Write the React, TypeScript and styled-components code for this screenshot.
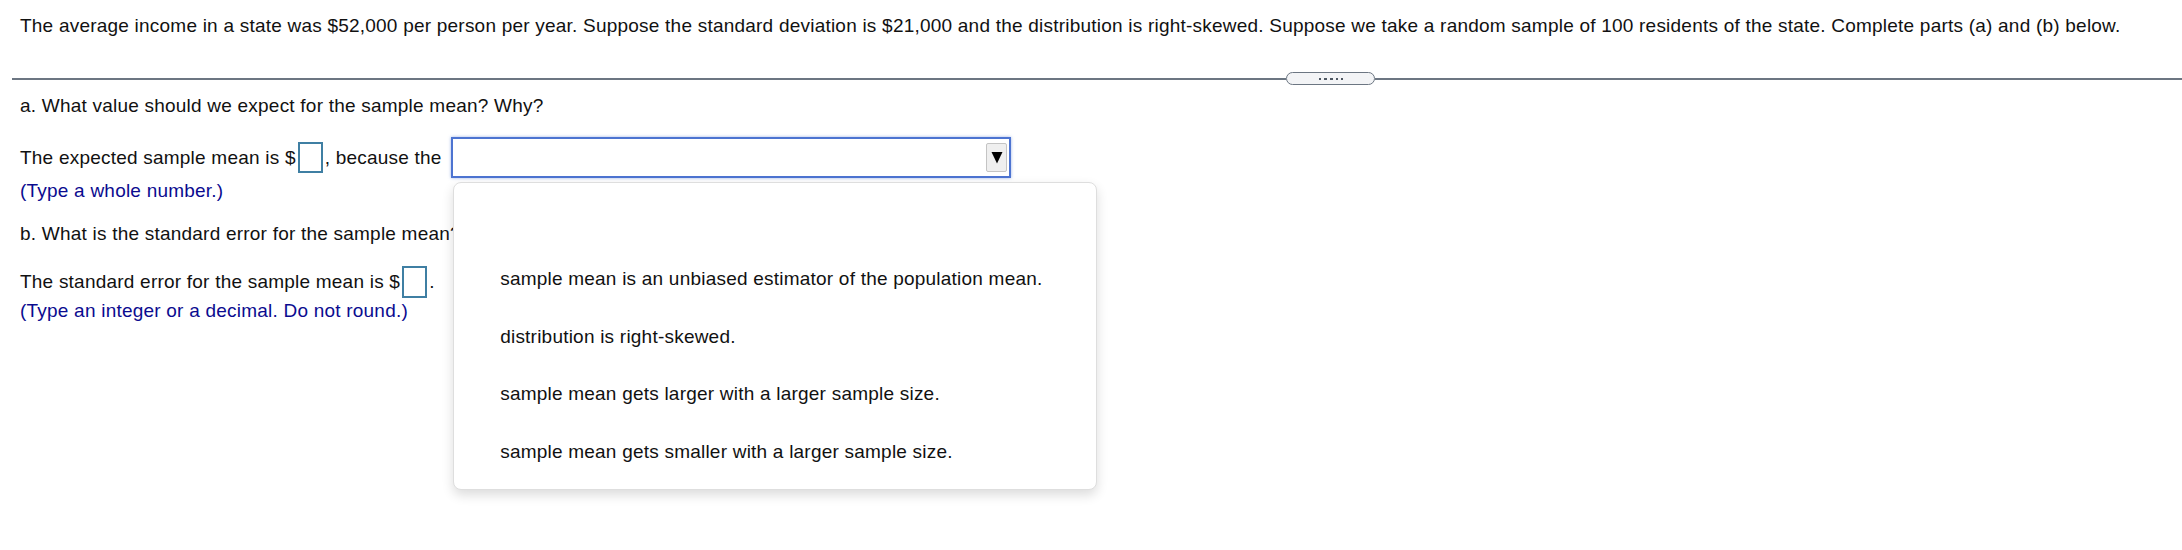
import React from "react";
import styled, { createGlobalStyle } from "styled-components";

const Global = createGlobalStyle`
  html, body { margin: 0; padding: 0; background: #ffffff; }
  body { font-family: "Liberation Sans", Arial, Helvetica, sans-serif; color: #111; }
`;

const Page = styled.div`
  padding-top: 15px;
  font-size: 19px;
  letter-spacing: 0.22px;
  line-height: 21.5px;
  width: 2182px;
  overflow: hidden;
  height: 550px;
  box-sizing: border-box;
`;

const Intro = styled.p`
  margin: 0;
  padding-left: 20px;
  white-space: nowrap;
`;

const Divider = styled.div`
  display: flex;
  align-items: center;
  margin: 35.5px 0 0 12px;
  height: 13px;
`;

const Rule = styled.div<{ $grow?: boolean }>`
  height: 2px;
  background: #6c7682;
  ${(p) => (p.$grow ? "flex: 1 1 auto;" : "flex: 0 0 1274px;")}
`;

const Handle = styled.div`
  flex: 0 0 auto;
  box-sizing: border-box;
  width: 89px;
  height: 13px;
  border: 1.5px solid #6c7682;
  border-radius: 7px;
  background: #f3f4f6;
  display: flex;
  align-items: center;
  justify-content: center;
  gap: 3px;
`;

const Dot = styled.span<{ $w: number }>`
  display: block;
  width: ${(p) => p.$w}px;
  height: 2px;
  background: #4f5863;
`;

const Section = styled.div`
  padding-left: 20px;
`;

const Question = styled.p<{ $top: number }>`
  margin: ${(p) => p.$top}px 0 0;
  white-space: nowrap;
`;

const Row = styled.div<{ $top: number }>`
  display: flex;
  align-items: center;
  margin-top: ${(p) => p.$top}px;
  white-space: pre;
`;

const Blank = styled.span`
  display: inline-block;
  box-sizing: border-box;
  width: 25px;
  height: 31.5px;
  border: 2px solid #3f7fa3;
  margin: 0 2px;
  background: #fff;
`;

const Hint = styled.p<{ $top: number }>`
  margin: ${(p) => p.$top}px 0 0;
  color: #0b0b8f;
  white-space: nowrap;
`;

const SelectWrap = styled.div`
  position: relative;
  margin-left: 4px;
`;

const SelectBox = styled.div`
  box-sizing: border-box;
  width: 560px;
  height: 41px;
  border: 2.5px solid #4d74d1;
  box-shadow: 0 0 3px rgba(77, 116, 209, 0.55);
  background: #fff;
  display: flex;
  align-items: center;
  justify-content: flex-end;
  padding-right: 2px;
`;

const ArrowButton = styled.div`
  box-sizing: border-box;
  width: 21px;
  height: 29px;
  background: #efefef;
  border: 1px solid #c4c4c4;
  border-radius: 2px;
  display: flex;
  align-items: center;
  justify-content: center;
`;

const Menu = styled.ul`
  position: absolute;
  left: 2px;
  top: 44.5px;
  box-sizing: border-box;
  width: 644px;
  height: 308.5px;
  margin: 0;
  padding: 10px 0;
  list-style: none;
  background: #fff;
  border: 1px solid #dedede;
  border-radius: 8px;
  box-shadow: 0 5px 12px rgba(0, 0, 0, 0.14);
  z-index: 10;
`;

const Option = styled.li`
  height: 57.6px;
  display: flex;
  align-items: center;
  padding-left: 46px;
  color: #111;
  white-space: nowrap;
`;

const options = [
  "",
  "sample mean is an unbiased estimator of the population mean.",
  "distribution is right-skewed.",
  "sample mean gets larger with a larger sample size.",
  "sample mean gets smaller with a larger sample size.",
];

export default function App() {
  return (
    <>
      <Global />
      <Page>
        <Intro>
          The average income in a state was $52,000 per person per year. Suppose the standard deviation is $21,000 and the
          distribution is right-skewed. Suppose we take a random sample of 100 residents of the state. Complete parts (a) and
          (b) below.
        </Intro>
        <Divider>
          <Rule />
          <Handle>
            <Dot $w={2} />
            <Dot $w={3} />
            <Dot $w={3} />
            <Dot $w={2} />
            <Dot $w={2} />
          </Handle>
          <Rule $grow />
        </Divider>
        <Section>
          <Question $top={9.5}>a. What value should we expect for the sample mean? Why?</Question>
          <Row $top={21}>
            <span>The expected sample mean is $</span>
            <Blank />
            <span>, because the </span>
            <SelectWrap>
              <SelectBox>
                <ArrowButton>
                  <svg width="12" height="13" viewBox="0 0 12 13">
                    <polygon points="0.5,1 11.5,1 6,12.5" fill="#000" />
                  </svg>
                </ArrowButton>
              </SelectBox>
              <Menu>
                {options.map((o, i) => (
                  <Option key={i}>{o}</Option>
                ))}
              </Menu>
            </SelectWrap>
          </Row>
          <Hint $top={1.5}>(Type a whole number.)</Hint>
          <Question $top={21.5}>b. What is the standard error for the sample mean?</Question>
          <Row $top={22}>
            <span>The standard error for the sample mean is $</span>
            <Blank />
            <span>.</span>
          </Row>
          <Hint $top={2.5}>(Type an integer or a decimal. Do not round.)</Hint>
        </Section>
      </Page>
    </>
  );
}
